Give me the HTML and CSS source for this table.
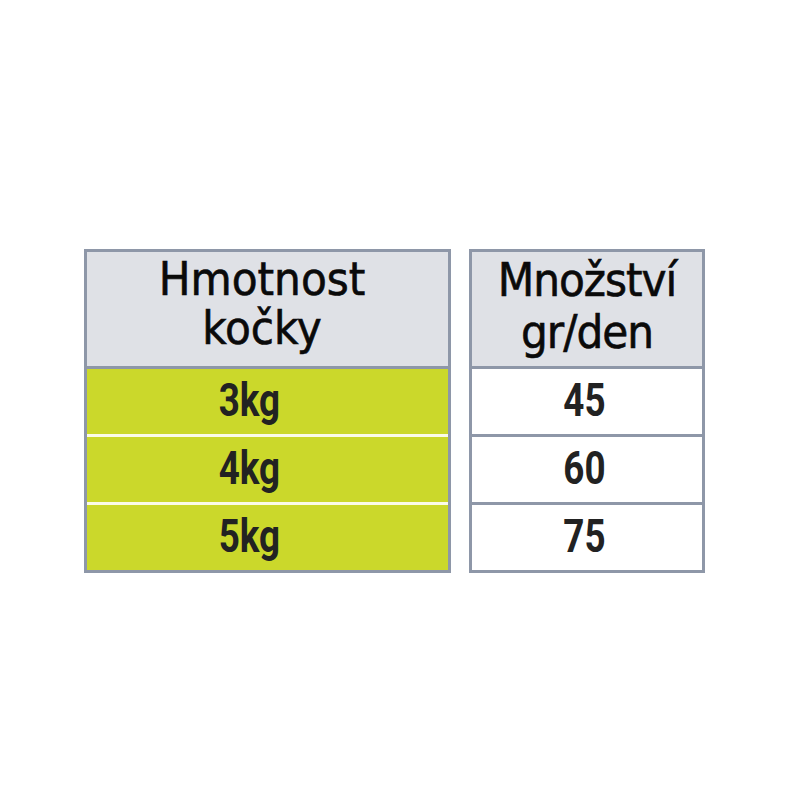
FILE: index.html
```html
<!DOCTYPE html>
<html lang="cs">
<head>
<meta charset="utf-8">
<title>Tabulka krmení</title>
<link rel="stylesheet" href="styles.css">
</head>
<body>
<div class="page">
  <div class="table table-weight">
    <div class="head"><span class="line">Hmotnost</span><span class="line">kočky</span></div>
    <div class="row"><span class="num">3kg</span></div>
    <div class="row"><span class="num">4kg</span></div>
    <div class="row"><span class="num">5kg</span></div>
  </div>
  <div class="table table-amount">
    <div class="head"><span class="line">Množství</span><span class="line">gr/den</span></div>
    <div class="row"><span class="num">45</span></div>
    <div class="row"><span class="num">60</span></div>
    <div class="row"><span class="num">75</span></div>
  </div>
</div>
</body>
</html>
```
FILE: styles.css
```css
html, body {
  margin: 0;
  padding: 0;
  background: #ffffff;
}
.page {
  display: flex;
  align-items: flex-start;
  gap: 18px;
  padding: 249px 0 0 84px;
}
.table {
  display: flex;
  flex-direction: column;
  border: 3px solid #8e97a8;
  background: #8e97a8;
  gap: 3px;
}
.table-weight {
  width: 361px;
}
.table-amount {
  width: 230px;
}
.head {
  height: 112px;
  padding-top: 2px;
  background: #dfe1e6;
  color: #0a0a0a;
  text-align: center;
  font-family: "DejaVu Sans Condensed", "DejaVu Sans", sans-serif;
  font-stretch: condensed;
  font-weight: normal;
  -webkit-text-stroke: 0.6px #0a0a0a;
}
.line {
  display: block;
}
.table-weight .head {
  font-size: 47px;
  line-height: 49px;
  padding-right: 11px;
}
.table-amount .head {
  font-size: 47px;
  line-height: 52px;
  letter-spacing: -1px;
}
.row {
  height: 65px;
  display: flex;
  align-items: center;
  justify-content: center;
}
.table-weight .row {
  background: #cbd82b;
  padding-right: 36px;
}
.table-weight .row + .row {
  box-shadow: 0 -3px 0 #fbfbe8;
}
.table-amount .row {
  background: #ffffff;
  padding-right: 5px;
}
.num {
  display: inline-block;
  font-family: Roboto, "Liberation Sans", sans-serif;
  font-weight: bold;
  font-size: 46px;
  line-height: 46px;
  color: #222222;
  transform: scaleX(0.8);
  margin-top: -3px;
}
```
